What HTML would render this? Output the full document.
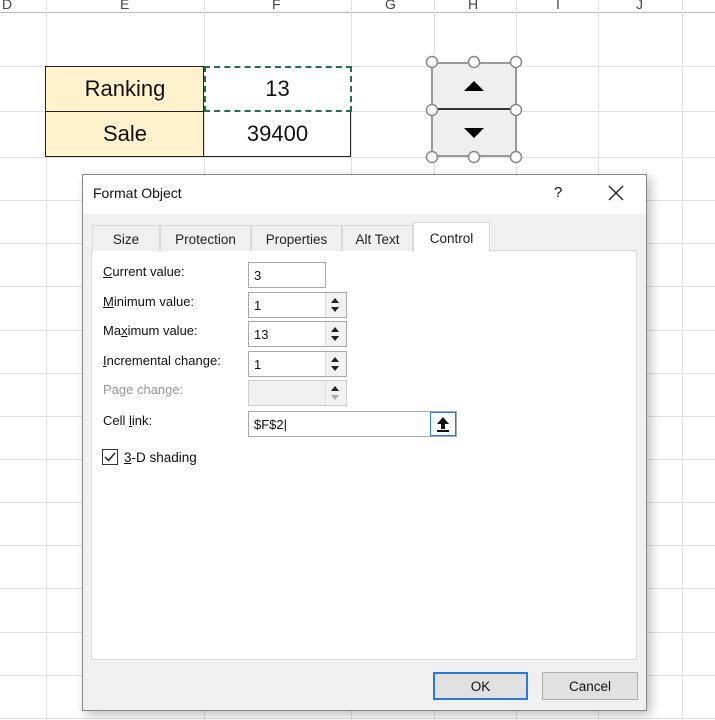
<!DOCTYPE html>
<html><head><meta charset="utf-8"><style>
*{margin:0;padding:0;box-sizing:border-box}
body{width:715px;height:720px;overflow:hidden;background:#fff;font-family:"Liberation Sans",sans-serif;position:relative}
.a{position:absolute}
.vl{position:absolute;top:0;height:720px;width:1px;background:#e1e1e1}
.hl{position:absolute;left:0;width:715px;height:1px;background:#e1e1e1}
.hdr{position:absolute;top:-4px;font-size:14px;color:#444}
.cell{position:absolute;font-size:22px;color:#111;text-align:center;font-family:"Liberation Sans",sans-serif}
.lbl{position:absolute;left:103px;font-size:13px;color:#111}
.fld{position:absolute;left:248px;height:26px;border:1px solid #a8a8a8;background:#fff;font-size:13px;padding:5px 0 0 5px;color:#111}
.sp{position:absolute;left:325px;width:21px;height:24px;border-left:1px solid #ddd;background:#f2f2f2}
.sp div{position:absolute;left:5px;width:0;height:0;border-left:4px solid transparent;border-right:4px solid transparent}
.tab{position:absolute;top:225px;height:26px;border:1px solid #d9d9d9;border-bottom:none;background:#f0f0f0;font-size:13.5px;color:#222;text-align:center;padding-top:6px}
u{text-decoration:underline}
</style></head><body>
<div class="hl" style="top:12px;background:#bbb"></div>
<div class="hl" style="top:66px"></div><div class="hl" style="top:111px"></div><div class="hl" style="top:157px"></div><div class="hl" style="top:200px"></div><div class="hl" style="top:243px"></div><div class="hl" style="top:286px"></div><div class="hl" style="top:330px"></div><div class="hl" style="top:373px"></div><div class="hl" style="top:416px"></div><div class="hl" style="top:459px"></div><div class="hl" style="top:502px"></div><div class="hl" style="top:545px"></div><div class="hl" style="top:588px"></div><div class="hl" style="top:632px"></div><div class="hl" style="top:675px"></div><div class="hl" style="top:718px"></div>
<div class="vl" style="left:46px"></div><div class="vl" style="left:204px"></div><div class="vl" style="left:351px"></div><div class="vl" style="left:434px"></div><div class="vl" style="left:516px"></div><div class="vl" style="left:598px"></div><div class="vl" style="left:682px"></div>
<div class="hdr" style="left:2px">D</div><div class="hdr" style="left:120px">E</div><div class="hdr" style="left:272px">F</div><div class="hdr" style="left:385px">G</div><div class="hdr" style="left:468px">H</div><div class="hdr" style="left:556px">I</div><div class="hdr" style="left:636px">J</div>

<div class="a" style="left:45px;top:66px;width:306px;height:91px;border:1px solid #222"></div>
<div class="a" style="left:46px;top:67px;width:158px;height:89px;background:#fff2cc;border-right:1px solid #222"></div>
<div class="a" style="left:46px;top:111px;width:305px;height:1px;background:#222"></div>
<div class="a" style="left:204px;top:66px;width:148px;height:46px;border:2px dashed #217346;background:#fff"></div>
<div class="cell" style="left:46px;top:76px;width:158px">Ranking</div>
<div class="cell" style="left:204px;top:76px;width:147px">13</div>
<div class="cell" style="left:46px;top:121px;width:158px">Sale</div>
<div class="cell" style="left:204px;top:121px;width:147px">39400</div>

<div class="a" style="left:431px;top:62px;width:86px;height:95px;border:2px solid #999;background:#efefef"></div>
<div class="a" style="left:432px;top:108px;width:84px;height:2px;background:#333"></div>
<div class="a" style="left:464px;top:81px;width:0;height:0;border-left:10px solid transparent;border-right:10px solid transparent;border-bottom:10px solid #000"></div>
<div class="a" style="left:464px;top:128px;width:0;height:0;border-left:10px solid transparent;border-right:10px solid transparent;border-top:10px solid #000"></div>
<svg class="a" style="left:0;top:0" width="715" height="170"><g fill="#fff" stroke="#888" stroke-width="1.5">
<circle cx="432" cy="62" r="5.5"/><circle cx="474" cy="62" r="5.5"/><circle cx="516" cy="62" r="5.5"/>
<circle cx="432" cy="110" r="5.5"/><circle cx="516" cy="110" r="5.5"/>
<circle cx="432" cy="157" r="5.5"/><circle cx="474" cy="157" r="5.5"/><circle cx="516" cy="157" r="5.5"/></g></svg>

<div class="a" style="left:82px;top:174px;width:565px;height:537px;background:#f0f0f0;border:1px solid #888;box-shadow:4px 4px 10px rgba(0,0,0,.25)"></div>
<div class="a" style="left:83px;top:175px;width:563px;height:39px;background:#fff"></div>
<div class="a" style="left:93px;top:185px;font-size:14px;color:#111">Format Object</div>
<div class="a" style="left:554px;top:184px;font-size:15px;color:#111">?</div>
<svg class="a" style="left:608px;top:185px" width="16" height="16"><path d="M1 1L15 15M15 1L1 15" stroke="#222" stroke-width="1.4"/></svg>

<div class="a" style="left:91px;top:250px;width:546px;height:410px;background:#fff;border:1px solid #d9d9d9"></div>
<div class="tab" style="left:92px;width:68px">Size</div>
<div class="tab" style="left:160px;width:91px">Protection</div>
<div class="tab" style="left:251px;width:91px">Properties</div>
<div class="tab" style="left:342px;width:71px">Alt Text</div>
<div class="tab" style="left:413px;top:222px;width:77px;height:30px;background:#fff;padding-top:8px">Control</div>

<div class="lbl" style="top:264px"><u>C</u>urrent value:</div>
<div class="lbl" style="top:294px"><u>M</u>inimum value:</div>
<div class="lbl" style="top:323px">Ma<u>x</u>imum value:</div>
<div class="lbl" style="top:353px"><u>I</u>ncremental change:</div>
<div class="lbl" style="top:382px;color:#999">Page change:</div>
<div class="lbl" style="top:413px">Cell <u>l</u>ink:</div>

<div class="fld" style="top:262px;width:78px">3</div>
<div class="fld" style="top:292px;width:99px">1</div>
<div class="fld" style="top:321px;width:99px">13</div>
<div class="fld" style="top:351px;width:99px">1</div>
<div class="fld" style="top:380px;width:99px;background:#f0f0f0;border-color:#ccc"></div>
<div class="sp" style="top:293px"><div style="top:5px;border-bottom:5px solid #222"></div><div style="top:14px;border-top:5px solid #222"></div></div>
<div class="sp" style="top:322px"><div style="top:5px;border-bottom:5px solid #222"></div><div style="top:14px;border-top:5px solid #222"></div></div>
<div class="sp" style="top:352px"><div style="top:5px;border-bottom:5px solid #222"></div><div style="top:14px;border-top:5px solid #222"></div></div>
<div class="sp" style="top:381px"><div style="top:5px;border-bottom:5px solid #222"></div><div style="top:14px;border-top:5px solid #aaa"></div></div>
<div class="fld" style="top:411px;width:209px">$F$2|</div>
<div class="a" style="left:430px;top:412px;width:26px;height:24px;border:1.5px solid #2a7ad8;background:#fff"></div>
<svg class="a" style="left:435px;top:415px" width="16" height="18"><path d="M8 2L2 9H6V14H10V9H14Z" fill="#111"/><rect x="2" y="15" width="12" height="2" fill="#111"/></svg>

<div class="a" style="left:102px;top:449px;width:16px;height:16px;border:1.5px solid #333;background:#fff"></div>
<svg class="a" style="left:102px;top:449px" width="16" height="16"><path d="M3 8L6.5 11.5L13 4" stroke="#222" stroke-width="1.5" fill="none"/></svg>
<div class="a" style="left:124px;top:450px;font-size:13.5px;color:#111"><u>3</u>-D shading</div>

<div class="a" style="left:433px;top:672px;width:95px;height:28px;border:2px solid #2a7ad8;background:#e1e1e1;font-size:13.5px;text-align:center;padding-top:5px;color:#111">OK</div>
<div class="a" style="left:542px;top:672px;width:96px;height:28px;border:1px solid #adadad;background:#e1e1e1;font-size:13.5px;text-align:center;padding-top:6px;color:#111">Cancel</div>
</body></html>
